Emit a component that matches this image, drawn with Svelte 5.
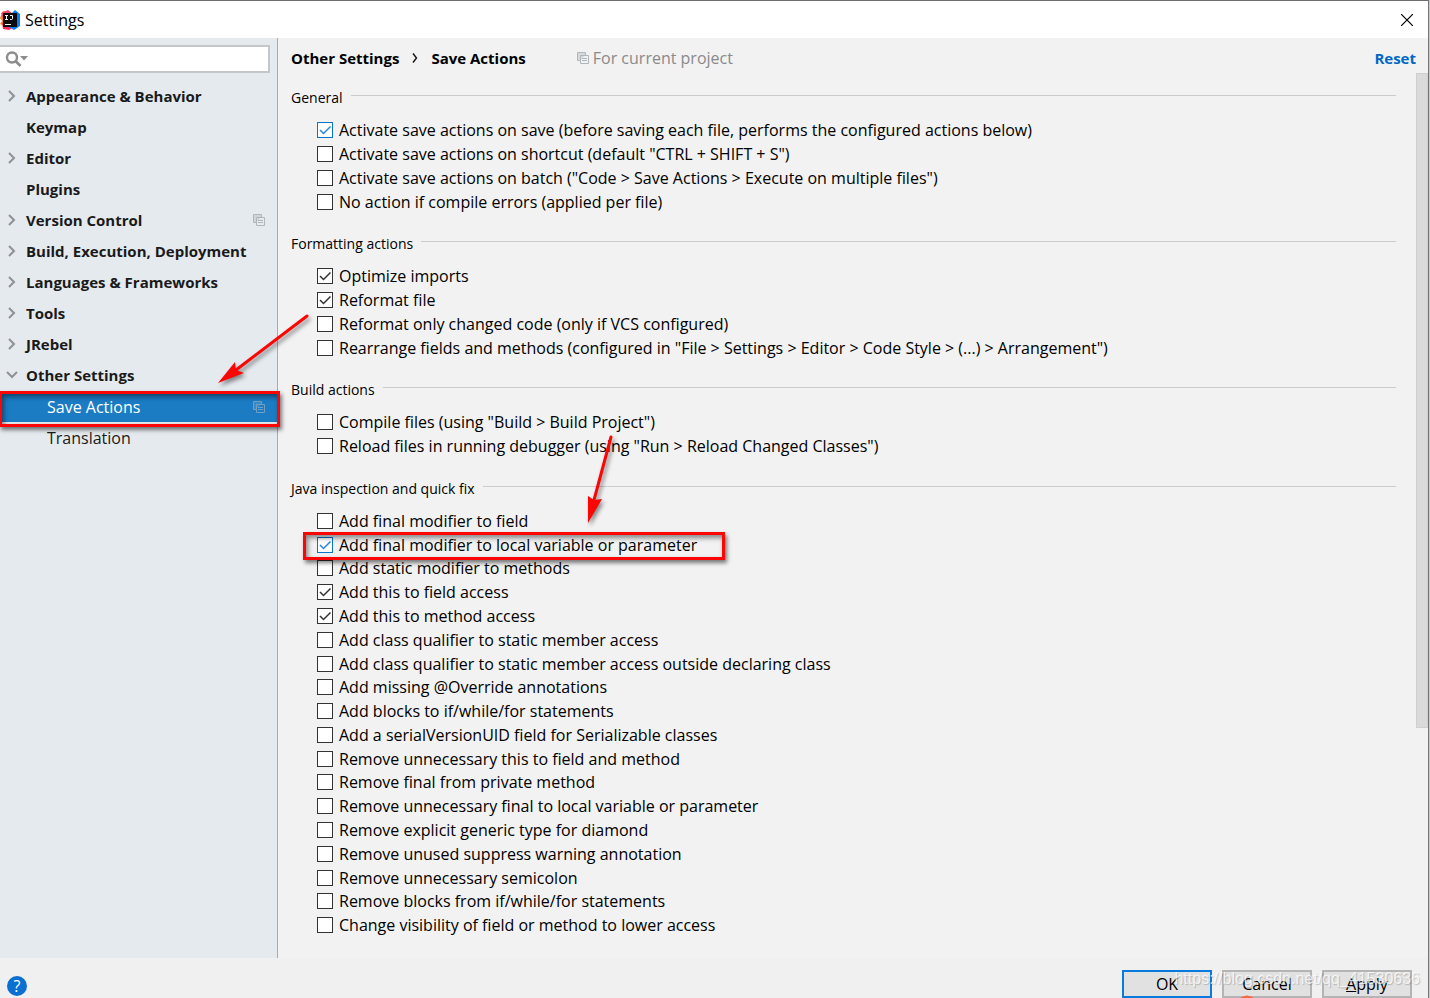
<script>
  const tree = [
    { label: 'Appearance & Behavior', arrow: 'right' },
    { label: 'Keymap' },
    { label: 'Editor', arrow: 'right' },
    { label: 'Plugins' },
    { label: 'Version Control', arrow: 'right', project: true },
    { label: 'Build, Execution, Deployment', arrow: 'right' },
    { label: 'Languages & Frameworks', arrow: 'right' },
    { label: 'Tools', arrow: 'right' },
    { label: 'JRebel', arrow: 'right' },
    { label: 'Other Settings', arrow: 'down' },
    { label: 'Save Actions', child: true, selected: true, project: true },
    { label: 'Translation', child: true },
  ];

  let groups = $state([
    {
      title: 'General',
      items: [
        { label: 'Activate save actions on save (before saving each file, performs the configured actions below)', on: true, hot: true },
        { label: 'Activate save actions on shortcut (default "CTRL + SHIFT + S")' },
        { label: 'Activate save actions on batch ("Code > Save Actions > Execute on multiple files")' },
        { label: 'No action if compile errors (applied per file)' },
      ],
    },
    {
      title: 'Formatting actions',
      items: [
        { label: 'Optimize imports', on: true },
        { label: 'Reformat file', on: true },
        { label: 'Reformat only changed code (only if VCS configured)' },
        { label: 'Rearrange fields and methods (configured in "File > Settings > Editor > Code Style > (...) > Arrangement")' },
      ],
    },
    {
      title: 'Build actions',
      items: [
        { label: 'Compile files (using "Build > Build Project")' },
        { label: 'Reload files in running debugger (using "Run > Reload Changed Classes")' },
      ],
    },
    {
      title: 'Java inspection and quick fix',
      items: [
        { label: 'Add final modifier to field' },
        { label: 'Add final modifier to local variable or parameter', on: true, hot: true, marked: true },
        { label: 'Add static modifier to methods' },
        { label: 'Add this to field access', on: true },
        { label: 'Add this to method access', on: true },
        { label: 'Add class qualifier to static member access' },
        { label: 'Add class qualifier to static member access outside declaring class' },
        { label: 'Add missing @Override annotations' },
        { label: 'Add blocks to if/while/for statements' },
        { label: 'Add a serialVersionUID field for Serializable classes' },
        { label: 'Remove unnecessary this to field and method' },
        { label: 'Remove final from private method' },
        { label: 'Remove unnecessary final to local variable or parameter' },
        { label: 'Remove explicit generic type for diamond' },
        { label: 'Remove unused suppress warning annotation' },
        { label: 'Remove unnecessary semicolon' },
        { label: 'Remove blocks from if/while/for statements' },
        { label: 'Change visibility of field or method to lower access' },
      ],
    },
  ]);
</script>

{#snippet copyIcon()}
  <svg class="copy" width="12" height="12" viewBox="0 0 12 12" fill="none" stroke="currentColor" aria-hidden="true">
    <path d="M3 8.500H0.500v-8h8V3" fill="currentColor" fill-opacity="0.4" />
    <path d="M3.500 3.500h8v8h-8z" />
    <path d="M5 6.500h5M5 8.500h5" />
  </svg>
{/snippet}

<div class="window">
  <header class="titlebar">
    <svg class="logo" width="20" height="20" viewBox="0 0 20 20" aria-hidden="true">
      <path d="M0 8l3-7 7 1-2 8-4 6-4-2 2-3z" fill="#fc801d" />
      <path d="M1 3l7-3 4 3-8 8z" fill="#f0436a" />
      <path d="M2 13l6 2 4 3-3 2-6-1z" fill="#fe2857" />
      <path d="M12 3l3-3 5 4v12l-6 4-5-3z" fill="#087cfa" />
      <path d="M3 3h14v14H3z" fill="#0b0b0e" />
      <path d="M5 5.500h3M6.500 5.500v4M5 9.500h3M10 5.500h2.500v3q0 1-1 1H10" stroke="#fff" fill="none" />
      <path d="M5 14.500h6" stroke="#fff" />
    </svg>
    <h1>Settings</h1>
    <button class="close" aria-label="Close">
      <svg width="12" height="12" viewBox="0 0 12 12" stroke="#000" stroke-width="1.200"><path d="M0 0l12 12M12 0L0 12" /></svg>
    </button>
  </header>

  <div class="body">
    <aside>
      <div class="search">
        <svg width="24" height="18" viewBox="0 0 24 18" aria-hidden="true">
          <circle cx="7" cy="7.500" r="5" fill="none" stroke="#8c8c8c" stroke-width="2.400" />
          <path d="M10.500 11l5 5" stroke="#8c8c8c" stroke-width="2.600" />
          <path d="M15 6h8l-4 4.500z" fill="#8c8c8c" />
        </svg>
        <input type="text" aria-label="Search settings" />
      </div>
      <nav>
        {#each tree as node}
          <a href="#settings" class:child={node.child} class:selected={node.selected}>
            <span class="chevron">
              {#if node.arrow === 'right'}
                <svg width="8" height="12" viewBox="0 0 8 12" fill="none" stroke="#8f9294" stroke-width="2"><path d="M1 1l5 5-5 5" /></svg>
              {:else if node.arrow === 'down'}
                <svg width="12" height="8" viewBox="0 0 12 8" fill="none" stroke="#8f9294" stroke-width="2"><path d="M1 1l5 5 5-5" /></svg>
              {/if}
            </span>
            <span class="name">{node.label}</span>
            {#if node.project}{@render copyIcon()}{/if}
            {#if node.selected}<span class="frame"></span>{/if}
          </a>
        {/each}
      </nav>
    </aside>

    <main>
      <div class="crumbs">
        <b>Other Settings</b>
        <svg width="6" height="10" viewBox="0 0 6 10" fill="none" stroke="#111" stroke-width="1.400"><path d="M1 0.500l3.500 4.500L1 9.500" /></svg>
        <b>Save Actions</b>
        <span class="scope">{@render copyIcon()}For current project</span>
        <a class="reset" href="#reset">Reset</a>
      </div>
      <div class="scroller">
        <div class="groups">
          {#each groups as group}
            <section>
              <h2>{group.title}</h2>
              <div class="list">
                {#each group.items as item}
                  <label class:hot={item.hot}>
                    <span class="box">
                      <input type="checkbox" bind:checked={item.on} />
                      {#if item.on}
                        <svg width="16" height="16" viewBox="0 0 16 16" fill="none" stroke="currentColor" stroke-width="1.500"><path d="M3 8l3.500 3.500L13.500 4.500" /></svg>
                      {/if}
                    </span>
                    {item.label}
                    {#if item.marked}<span class="frame"></span>{/if}
                  </label>
                {/each}
              </div>
            </section>
          {/each}
        </div>
        <div class="track"><div class="thumb"></div></div>
      </div>
    </main>
  </div>

  <footer>
    <button class="help" aria-label="Help">?</button>
    <button class="btn primary">OK</button>
    <button class="btn">Cancel</button>
    <button class="btn"><u>A</u>pply</button>
    <svg class="spot" width="14" height="3" viewBox="0 0 14 3" aria-hidden="true"><path d="M0 3q7-5 14 0z" fill="#f5693c" /></svg>
    <span class="watermark">https://blog.csdn.net/qq_41530636</span>
  </footer>

  <svg class="arrows" width="640" height="540" viewBox="0 0 640 540" aria-hidden="true">
    <g fill="#fb0505" stroke="#fb0505">
      <path d="M307 316L236 370" stroke-width="3" stroke-linecap="round" />
      <path d="M218 383l17-21 1 8 8 3z" stroke="none" />
      <path d="M611 437L594 500" stroke-width="3" stroke-linecap="round" />
      <path d="M588 523l0-27 6 4 8-1z" stroke="none" />
    </g>
  </svg>
</div>

<style>
  :global(body) {
    margin: 0;
    background: #c9c9c9;
  }
  .window {
    position: relative;
    box-sizing: border-box;
    min-height: 100vh;
    margin-right: 1px;
    border-top: 1px solid #6e6c70;
    border-right: 1px solid #77757a;
    display: flex;
    flex-direction: column;
    overflow: hidden;
    background: #f2f2f2;
    color: #000;
    font: 16px/24px "Open Sans", "Noto Sans", sans-serif;
  }
  button {
    font: inherit;
    color: inherit;
    padding: 0;
  }
  a {
    color: inherit;
    text-decoration: none;
  }
  b,
  .reset,
  nav a {
    font-size: 15px;
    font-weight: 700;
  }
  svg {
    flex: none;
    display: block;
  }
  .titlebar {
    display: flex;
    align-items: center;
    height: 37px;
    padding-right: 15px;
    background: #fff;
  }
  h1 {
    flex: 1;
    margin: 0 0 0 5px;
    font-size: 16px;
    font-weight: 400;
  }
  .close {
    border: 0;
    background: none;
  }
  .body {
    flex: 1;
    display: flex;
  }
  aside {
    box-sizing: border-box;
    width: 278px;
    flex: none;
    padding-top: 7px;
    border-right: 1px solid #a9abac;
    background: #e5eaee;
  }
  .search {
    display: flex;
    align-items: center;
    box-sizing: border-box;
    width: 270px;
    height: 28px;
    padding-left: 5px;
    border: 2px solid #c4c7c9;
    border-left: 0;
    background: #fff;
  }
  .search input {
    flex: 1;
    min-width: 0;
    padding: 0;
    border: 0;
    outline: 0;
    background: none;
    font: inherit;
  }
  nav {
    display: flex;
    flex-direction: column;
    padding-top: 7px;
  }
  nav a {
    position: relative;
    display: flex;
    align-items: center;
    height: 31px;
    padding: 0 12px 0 6px;
    color: #1a1a1a;
  }
  .chevron {
    display: flex;
    justify-content: center;
    width: 12px;
    margin-right: 8px;
  }
  .name {
    flex: 1;
  }
  nav .child {
    padding-left: 27px;
    font-size: 16px;
    font-weight: 400;
  }
  nav .selected {
    margin-top: 1px;
    background: #1b7cc4;
    color: #fff;
  }
  .copy {
    color: #b0b7bc;
  }
  .selected .copy {
    color: #6f9fc4;
  }
  .frame {
    position: absolute;
    inset: -1px -28px -3px -14px;
    border: 3px solid #fb0505;
    box-shadow: 2px 3px 4px rgba(0, 0, 0, 0.5), inset 2px 3px 5px rgba(0, 0, 0, 0.45);
    pointer-events: none;
    z-index: 2;
  }
  nav .frame {
    inset: 0 -3px -5px -1px;
  }
  main {
    flex: 1;
    min-width: 0;
    display: flex;
    flex-direction: column;
  }
  .crumbs {
    display: flex;
    align-items: center;
    gap: 13px;
    height: 30px;
    padding: 5px 12px 0 13px;
  }
  .scope {
    display: flex;
    align-items: center;
    gap: 4px;
    margin-left: 38px;
    color: #8a8a8a;
  }
  .reset {
    margin-left: auto;
    color: #0068c4;
  }
  .scroller {
    flex: 1;
    display: flex;
  }
  .groups {
    flex: 1;
    display: flex;
    flex-direction: column;
    gap: 20px;
    padding: 15px 20px 21px 13px;
  }
  section {
    display: flex;
    flex-direction: column;
    gap: 10px;
  }
  section:last-child {
    flex: 1;
    padding-top: 1px;
  }
  h2 {
    display: flex;
    gap: 8px;
    margin: 0;
    font-size: 14px;
    line-height: 20px;
    font-weight: 400;
  }
  h2::after {
    content: '';
    flex: 1;
    height: 1px;
    margin-top: 7px;
    background: #cbcbcb;
  }
  .list {
    flex: 1;
    display: grid;
    grid-auto-rows: 1fr;
    justify-items: start;
    padding-left: 26px;
  }
  label {
    position: relative;
    display: flex;
    align-items: center;
    gap: 6px;
    line-height: 22px;
    min-height: 23px;
  }
  section:not(:last-child) label {
    min-height: 24px;
  }
  .box {
    display: grid;
    color: #333;
  }
  .box > * {
    grid-area: 1 / 1;
  }
  .box svg {
    pointer-events: none;
  }
  .box input {
    appearance: none;
    box-sizing: border-box;
    width: 16px;
    height: 16px;
    margin: 0;
    border: 1px solid #333;
    background: #fff;
  }
  .hot .box {
    color: #2a86d8;
  }
  .hot input {
    border-color: #0a74d1;
  }
  .track {
    width: 12px;
  }
  .thumb {
    box-sizing: border-box;
    height: 74%;
    border: 1px solid #cfcfcf;
    background: #dadada;
  }
  footer {
    position: relative;
    display: flex;
    align-items: flex-end;
    gap: 10px;
    height: 40px;
    padding-right: 16px;
    background: #f0f0f0;
  }
  .help {
    width: 20px;
    height: 20px;
    margin: 0 auto 2px 7px;
    border: 0;
    border-radius: 50%;
    background: #0a6fd0;
    color: #fff;
    line-height: 20px;
  }
  .btn {
    box-sizing: border-box;
    width: 90px;
    height: 28px;
    border: 2px solid #b4b4b4;
    background: #e1e1e1;
    line-height: 24px;
  }
  .primary {
    border-color: #0a7bdc;
  }
  .spot {
    position: absolute;
    right: 174px;
    bottom: 0;
  }
  .watermark {
    position: absolute;
    right: 8px;
    bottom: 7px;
    color: rgba(255, 255, 255, 0.75);
    font: 16px/24px "Liberation Sans", Arial, sans-serif;
    text-shadow: 1px 1px 1px rgba(0, 0, 0, 0.2);
    pointer-events: none;
  }
  .arrows {
    position: absolute;
    top: -1px;
    left: 0;
    pointer-events: none;
    filter: drop-shadow(2px 3px 2px rgba(0, 0, 0, 0.45));
  }
</style>
